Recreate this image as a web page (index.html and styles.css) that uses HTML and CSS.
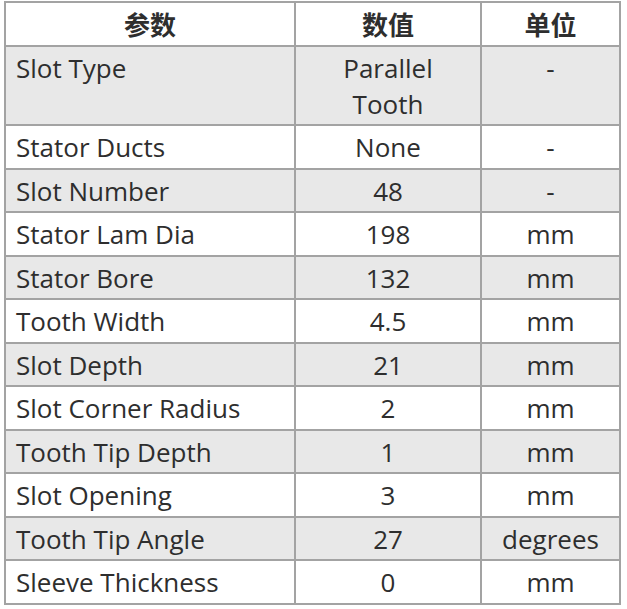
FILE: index.html
```html
<!DOCTYPE html>
<html>
<head>
<meta charset="utf-8">
<link rel="stylesheet" href="styles.css">
</head>
<body>
<table class="params">
  <colgroup>
    <col class="c1"><col class="c2"><col class="c3">
  </colgroup>
  <thead>
    <tr><th>参数</th><th>数值</th><th>单位</th></tr>
  </thead>
  <tbody>
    <tr class="alt"><td>Slot Type</td><td class="ctr">Parallel<br>Tooth</td><td class="ctr">-</td></tr>
    <tr><td>Stator Ducts</td><td class="ctr">None</td><td class="ctr">-</td></tr>
    <tr class="alt"><td>Slot Number</td><td class="ctr">48</td><td class="ctr">-</td></tr>
    <tr><td>Stator Lam Dia</td><td class="ctr">198</td><td class="ctr">mm</td></tr>
    <tr class="alt"><td>Stator Bore</td><td class="ctr">132</td><td class="ctr">mm</td></tr>
    <tr><td>Tooth Width</td><td class="ctr">4.5</td><td class="ctr">mm</td></tr>
    <tr class="alt"><td>Slot Depth</td><td class="ctr">21</td><td class="ctr">mm</td></tr>
    <tr><td>Slot Corner Radius</td><td class="ctr">2</td><td class="ctr">mm</td></tr>
    <tr class="alt"><td>Tooth Tip Depth</td><td class="ctr">1</td><td class="ctr">mm</td></tr>
    <tr><td>Slot Opening</td><td class="ctr">3</td><td class="ctr">mm</td></tr>
    <tr class="alt"><td>Tooth Tip Angle</td><td class="ctr">27</td><td class="ctr">degrees</td></tr>
    <tr><td>Sleeve Thickness</td><td class="ctr">0</td><td class="ctr">mm</td></tr>
  </tbody>
</table>
</body>
</html>
```
FILE: styles.css
```css
html, body {
  margin: 0;
  padding: 0;
  background: #ffffff;
}
body {
  padding: 1px 0 0 4px;
  font-family: "Open Sans", "Noto Sans", "Noto Sans CJK SC", sans-serif;
  color: #2e2e2e;
}
.params {
  border-collapse: collapse;
  width: 615px;
  table-layout: fixed;
  font-size: 26px;
  line-height: 36px;
}
.c1 { width: 290px; }
.c2 { width: 186px; }
.c3 { width: 139px; }
.params th, .params td {
  border: 2px solid #a3a3a3;
  padding: 3px 10px 2.5px 10px;
  vertical-align: top;
}
.params th {
  font-family: "Noto Sans CJK SC", sans-serif;
  font-weight: 700;
  font-size: 26px;
  text-align: center;
  background: #ffffff;
  color: #2e2e2e;
}
.params td.ctr {
  text-align: center;
}
.params tr.alt td {
  background: #e8e8e8;
}
```
